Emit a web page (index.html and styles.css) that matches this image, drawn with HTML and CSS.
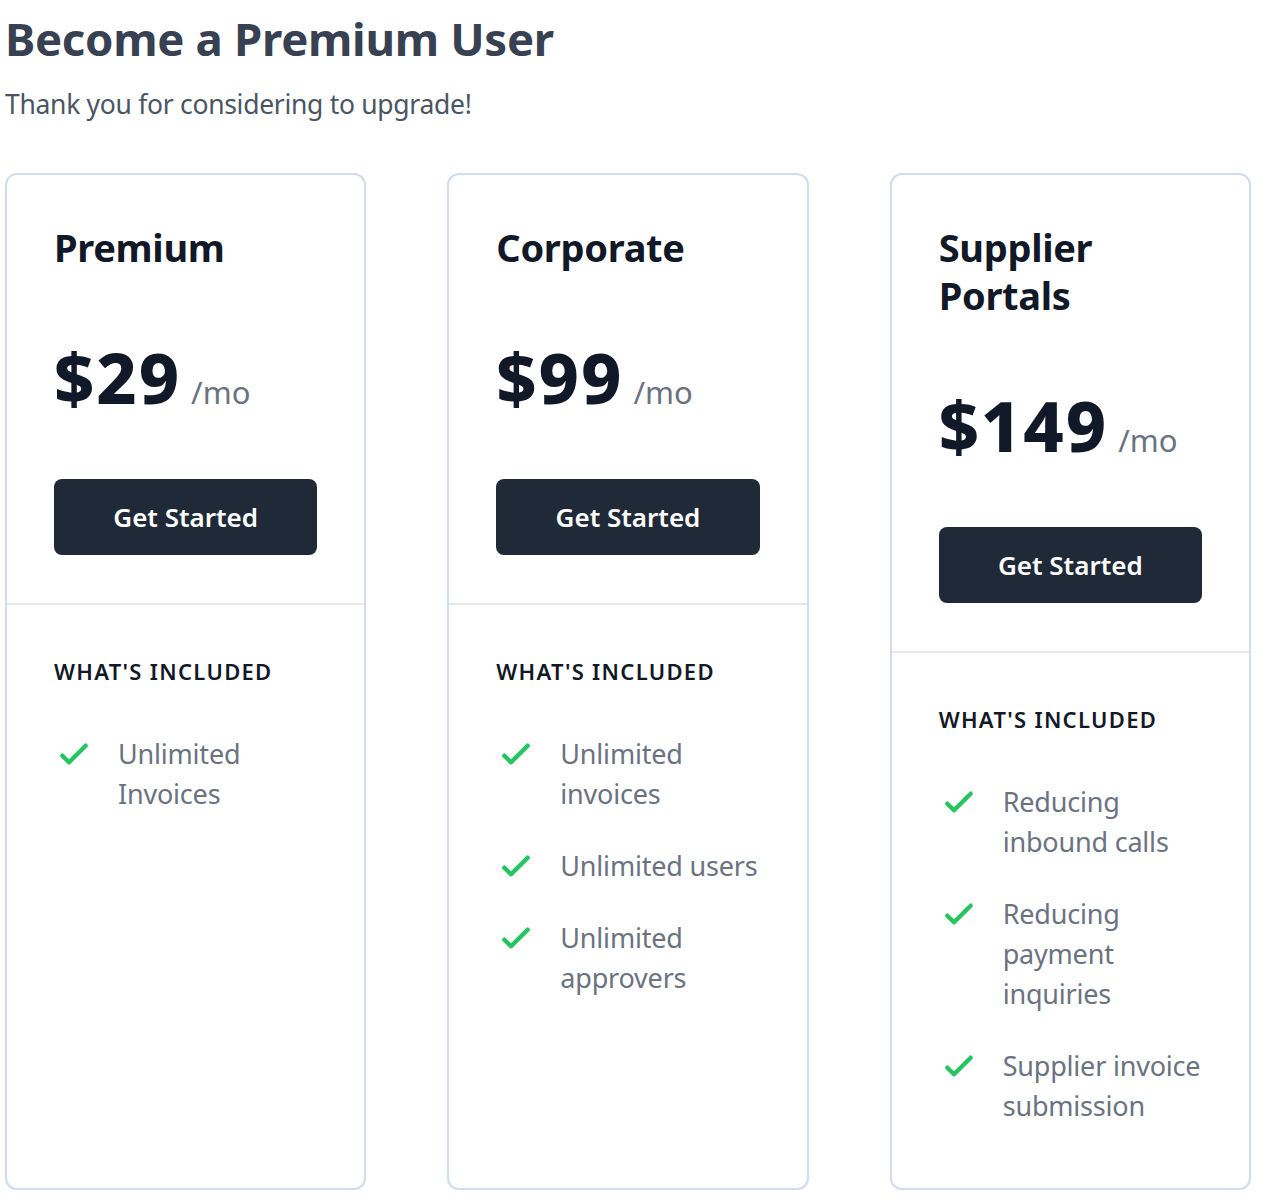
FILE: index.html
```html
<!DOCTYPE html>
<html lang="en">
<head>
<meta charset="utf-8">
<title>Become a Premium User</title>
<link rel="stylesheet" href="styles.css">
</head>
<body>
<main class="page">
  <h1 class="title">Become a Premium User</h1>
  <p class="subtitle">Thank you for considering to upgrade!</p>
  <div class="plans">
    <section class="card">
      <div class="card-top">
        <h2 class="plan-name">Premium</h2>
        <p class="price"><span class="amount">$29</span> <span class="per">/mo</span></p>
        <a class="btn" href="#">Get Started</a>
      </div>
      <div class="card-bottom">
        <h3 class="included">What's included</h3>
        <ul class="features">
          <li><svg class="check" viewBox="0 0 24 24"><path d="M5 13l4 4L19 7"/></svg><span>Unlimited Invoices</span></li>
        </ul>
      </div>
    </section>
    <section class="card">
      <div class="card-top">
        <h2 class="plan-name">Corporate</h2>
        <p class="price"><span class="amount">$99</span> <span class="per">/mo</span></p>
        <a class="btn" href="#">Get Started</a>
      </div>
      <div class="card-bottom">
        <h3 class="included">What's included</h3>
        <ul class="features">
          <li><svg class="check" viewBox="0 0 24 24"><path d="M5 13l4 4L19 7"/></svg><span>Unlimited invoices</span></li>
          <li><svg class="check" viewBox="0 0 24 24"><path d="M5 13l4 4L19 7"/></svg><span>Unlimited users</span></li>
          <li><svg class="check" viewBox="0 0 24 24"><path d="M5 13l4 4L19 7"/></svg><span>Unlimited approvers</span></li>
        </ul>
      </div>
    </section>
    <section class="card">
      <div class="card-top">
        <h2 class="plan-name">Supplier Portals</h2>
        <p class="price"><span class="amount">$149</span> <span class="per">/mo</span></p>
        <a class="btn" href="#">Get Started</a>
      </div>
      <div class="card-bottom">
        <h3 class="included">What's included</h3>
        <ul class="features">
          <li><svg class="check" viewBox="0 0 24 24"><path d="M5 13l4 4L19 7"/></svg><span>Reducing inbound calls</span></li>
          <li><svg class="check" viewBox="0 0 24 24"><path d="M5 13l4 4L19 7"/></svg><span>Reducing payment inquiries</span></li>
          <li><svg class="check" viewBox="0 0 24 24"><path d="M5 13l4 4L19 7"/></svg><span>Supplier invoice submission</span></li>
        </ul>
      </div>
    </section>
  </div>
</main>
</body>
</html>
```

FILE: styles.css
```css
* { box-sizing: border-box; }
html, body { margin: 0; padding: 0; background: #ffffff; }
body {
  font-family: "Noto Sans", "Open Sans", sans-serif;
  color: #111827;
}
.page {
  width: 1246px;
  margin-left: 5px;
  padding-top: 8px;
}
.title {
  margin: 0;
  font-size: 45.5px;
  line-height: 60px;
  font-weight: 700;
  color: #374151;
  letter-spacing: -0.3px;
}
.subtitle {
  margin: 18px 0 0;
  font-size: 26.5px;
  line-height: 36px;
  color: #4b5563;
  letter-spacing: -0.3px;
}
.plans {
  margin-top: 51px;
  display: grid;
  grid-template-columns: repeat(3, 1fr);
  column-gap: 81px;
}
.card {
  border: 2px solid #d3dbef;
  border-radius: 12px;
  box-shadow: 0 1px 2px rgba(15, 23, 42, 0.06);
  display: flex;
  flex-direction: column;
}
.card-top {
  padding: 48px 47px 48px;
  border-bottom: 2px solid #e5e7eb;
}
.plan-name {
  margin: 0;
  font-size: 38px;
  line-height: 48px;
  font-weight: 700;
  color: #111827;
  letter-spacing: -0.3px;
}
.price {
  margin: 72px 0 0;
  line-height: 68px;
  display: flex;
  align-items: baseline;
  gap: 10px;
}
.amount {
  font-size: 70px;
  font-weight: 800;
  color: #111827;
  letter-spacing: 2px;
}
.per {
  font-size: 31px;
  color: #6b7280;
}
.btn {
  display: block;
  margin-top: 53px;
  height: 76px;
  line-height: 76px;
  border-radius: 8px;
  background: #1f2937;
  color: #ffffff;
  text-align: center;
  text-decoration: none;
  font-size: 26px;
  font-weight: 600;
}
.card-bottom {
  padding: 50px 47px 62px;
}
.included {
  margin: 0;
  font-size: 22px;
  line-height: 32px;
  font-weight: 600;
  text-transform: uppercase;
  letter-spacing: 1.3px;
  color: #111827;
}
.features {
  list-style: none;
  margin: 47px 0 0;
  padding: 0;
  display: flex;
  flex-direction: column;
  gap: 32px;
}
.features li {
  display: flex;
  align-items: flex-start;
  gap: 24px;
}
.check {
  flex: none;
  width: 40px;
  height: 40px;
  fill: none;
  stroke: #22c55e;
  stroke-width: 2.6;
  stroke-linecap: round;
  stroke-linejoin: round;
}
.features span {
  font-size: 27px;
  line-height: 40px;
  color: #6b7280;
  letter-spacing: -0.2px;
}
```
